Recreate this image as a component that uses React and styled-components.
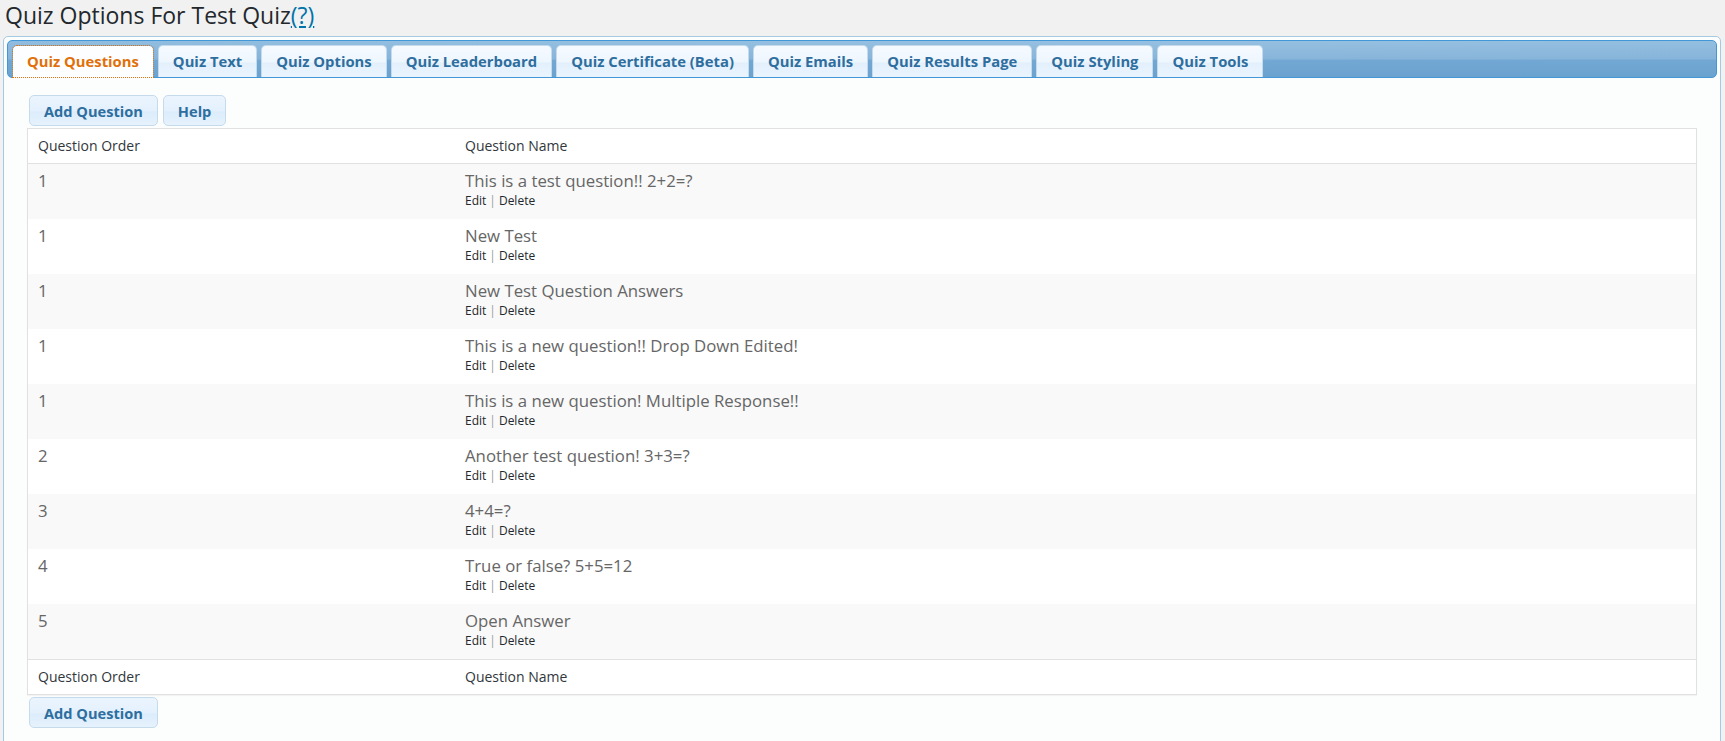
import React from 'react';
import styled, { createGlobalStyle } from 'styled-components';

const tabs = [
  'Quiz Questions',
  'Quiz Text',
  'Quiz Options',
  'Quiz Leaderboard',
  'Quiz Certificate (Beta)',
  'Quiz Emails',
  'Quiz Results Page',
  'Quiz Styling',
  'Quiz Tools',
];

const questions = [
  { order: 1, name: 'This is a test question!! 2+2=?' },
  { order: 1, name: 'New Test' },
  { order: 1, name: 'New Test Question Answers' },
  { order: 1, name: 'This is a new question!! Drop Down Edited!' },
  { order: 1, name: 'This is a new question! Multiple Response!!' },
  { order: 2, name: 'Another test question! 3+3=?' },
  { order: 3, name: '4+4=?' },
  { order: 4, name: 'True or false? 5+5=12' },
  { order: 5, name: 'Open Answer' },
];

const App = () => (
  <>
    <GlobalStyle />
    <Page>
      <Title>
        Quiz Options For Test Quiz<HelpLink href="#">(?)</HelpLink>
      </Title>
      <Widget>
        <TabBar>
          {tabs.map((t, i) => (
            <Tab key={t} active={i === 0}>{t}</Tab>
          ))}
        </TabBar>
        <Panel>
          <ButtonRow>
            <Button>Add Question</Button>
            <Button>Help</Button>
          </ButtonRow>
          <Table>
            <thead>
              <tr>
                <HeadCell first>Question Order</HeadCell>
                <HeadCell>Question Name</HeadCell>
              </tr>
            </thead>
            <tbody>
              {questions.map((q, i) => (
                <Row key={i} odd={i % 2 === 0}>
                  <Cell>{q.order}</Cell>
                  <Cell>
                    <QuestionName>{q.name}</QuestionName>
                    <Actions>
                      <ActionLink href="#">Edit</ActionLink>
                      <Sep>|</Sep>
                      <ActionLink href="#">Delete</ActionLink>
                    </Actions>
                  </Cell>
                </Row>
              ))}
            </tbody>
            <tfoot>
              <tr>
                <FootCell>Question Order</FootCell>
                <FootCell>Question Name</FootCell>
              </tr>
            </tfoot>
          </Table>
          <ButtonRow bottom>
            <Button>Add Question</Button>
          </ButtonRow>
        </Panel>
      </Widget>
    </Page>
  </>
);

export default App;

const GlobalStyle = createGlobalStyle`
  html, body {
    margin: 0;
    background: #f1f1f1;
    font-family: "Open Sans", sans-serif;
    color: #444;
  }
`;

const Page = styled.div`
  padding: 0 4px 0 3px;
`;

const Title = styled.h2`
  margin: 0 0 6px 2px;
  font-size: 23px;
  font-weight: 400;
  line-height: 30px;
  color: #23282d;
`;

const HelpLink = styled.a`
  color: #0073aa;
  text-decoration: underline;
`;

const Widget = styled.div`
  border: 1px solid #a6c9e2;
  border-radius: 5px;
  background: #fcfdfd;
  padding: 3px;
  min-height: 760px;
`;

const TabBar = styled.ul`
  display: flex;
  align-items: flex-start;
  gap: 4px;
  margin: 0;
  padding: 4px 4px 0;
  list-style: none;
  border: 1px solid #4297d7;
  border-radius: 5px;
  background:
    radial-gradient(ellipse 70% 60% at 65% 0%, rgba(255, 255, 255, 0.06), rgba(255, 255, 255, 0) 100%),
    linear-gradient(to bottom, #8fbcdf 0%, #86b4da 50%, #72a8d3 53%, #6aa2cf 100%);
`;

const Tab = styled.li`
  box-sizing: border-box;
  height: ${(p) => (p.active ? '33px' : '32px')};
  margin-bottom: ${(p) => (p.active ? '-1px' : '0')};
  padding: 0 14px;
  border: 1px solid ${(p) => (p.active ? '#79b7e7' : '#c5dbec')};
  border-bottom: 0;
  border-radius: 5px 5px 0 0;
  background: ${(p) =>
    p.active
      ? '#fdfeff'
      : 'linear-gradient(to bottom, #f5faff 0%, #eef6fe 50%, #e3f0fc 55%, #e9f4fe 100%)'};
  outline: ${(p) => (p.active ? '1px dotted #e17009' : 'none')};
  outline-offset: -1px;
  color: ${(p) => (p.active ? '#e17009' : '#2e6e9e')};
  font-size: 14.8px;
  font-weight: 700;
  line-height: 31px;
  white-space: nowrap;
  cursor: pointer;
`;

const Panel = styled.div`
  padding: 17px 20px 20px;
`;

const ButtonRow = styled.div`
  display: flex;
  gap: 5px;
  margin: ${(p) => (p.bottom ? '2px 0 0 2px' : '0 0 2px 2px')};
`;

const Button = styled.button`
  box-sizing: border-box;
  height: 31px;
  padding: 0 14px;
  border: 1px solid #c5dbec;
  border-radius: 5px;
  background: linear-gradient(to bottom, #eaf4fe 0%, #e4f1fd 50%, #dcecfb 55%, #e6f2fd 100%);
  color: #2e6e9e;
  font-family: "Open Sans", sans-serif;
  font-size: 14.6px;
  font-weight: 700;
  cursor: pointer;
`;

const Table = styled.table`
  width: 100%;
  border-collapse: separate;
  border-spacing: 0;
  border: 1px solid #e1e1e1;
  background: #fff;
  box-shadow: 0 1px 1px rgba(0, 0, 0, 0.04);
`;

const HeadCell = styled.th`
  width: ${(p) => (p.first ? '407px' : 'auto')};
  padding: 8px 10px;
  border-bottom: 1px solid #e1e1e1;
  text-align: left;
  font-size: 14px;
  font-weight: 400;
  line-height: 18px;
  color: #32373c;
`;

const FootCell = styled.th`
  padding: 8px 10px;
  border-top: 1px solid #e1e1e1;
  text-align: left;
  font-size: 14px;
  font-weight: 400;
  line-height: 18px;
  color: #32373c;
`;

const Row = styled.tr`
  background: ${(p) => (p.odd ? '#f9f9f9' : '#fff')};
`;

const Cell = styled.td`
  padding: 6px 10px 10px;
  vertical-align: top;
  font-size: 16.8px;
  line-height: 22px;
  color: #666;
`;

const QuestionName = styled.div`
  color: #666;
`;

const Actions = styled.div`
  font-size: 12px;
  line-height: 17px;
  color: #999;
`;

const ActionLink = styled.a`
  color: #23282d;
  text-decoration: none;
`;

const Sep = styled.span`
  margin: 0 3px;
  color: #999;
`;
